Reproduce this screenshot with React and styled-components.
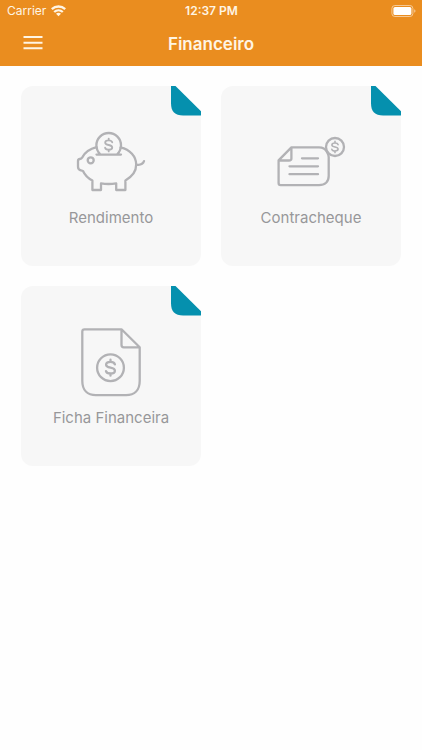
import React from "react";
import styled, { createGlobalStyle } from "styled-components";

const GlobalStyle = createGlobalStyle`
    * {
        box-sizing: border-box;
    }

    body {
        margin: 0;
        background: #fefefe;
        font-family: Inter, "Liberation Sans", sans-serif;
    }
`;

const Header = styled.header`
    background: #ea8d1f;
    color: #fff5e4;
`;

const StatusBar = styled.div`
    display: grid;
    grid-template-columns: 1fr auto 1fr;
    align-items: center;
    height: 22px;
    padding: 0 6px 0 7px;
    font-size: 12px;
    line-height: 22px;
`;

const Carrier = styled.div`
    display: flex;
    align-items: center;
    gap: 5px;
`;

const Clock = styled.time`
    font-weight: 600;
`;

const Battery = styled.svg`
    justify-self: end;
`;

const NavBar = styled.div`
    display: grid;
    grid-template-columns: 1fr auto 1fr;
    align-items: center;
    height: 44px;
    padding: 0 21px;
`;

const MenuButton = styled.button`
    display: flex;
    justify-self: start;
    padding: 0;
    border: 0;
    background: none;
    color: inherit;
    cursor: pointer;
`;

const Title = styled.h1`
    margin: 0;
    font-size: 17px;
    font-weight: 600;
    line-height: 24px;
`;

const CardGrid = styled.main`
    display: grid;
    grid-template-columns: 1fr 1fr;
    gap: 20px;
    padding: 20px 21px;
`;

const Card = styled.button`
    position: relative;
    display: flex;
    flex-direction: column;
    align-items: center;
    gap: 9px;
    aspect-ratio: 1;
    padding: 40px 0 0;
    border: 0;
    border-radius: 12px;
    background: #f7f7f7;
    color: #97979a;
    font-family: inherit;
    cursor: pointer;
`;

const Fold = styled.svg`
    position: absolute;
    top: 0;
    right: 0;
`;

const CardIcon = styled.svg`
    width: 80px;
    height: 72px;
    fill: none;
    stroke: #b2b2b5;
    stroke-width: 2.3;
    stroke-linecap: round;
    stroke-linejoin: round;
`;

const CardLabel = styled.span`
    font-size: 15px;
    line-height: 22px;
`;

const Dollar = ({ x, y, scale = 1 }) => (
    <path
        transform={`translate(${x} ${y}) scale(${scale})`}
        d="M4.4 -3.4C3.8 -5.2 2.2 -5.8 0 -5.8C-2.6 -5.8 -4.4 -4.7 -4.4 -2.9C-4.4 -1 -2.6 -.5 0 0C2.6 .5 4.4 1.1 4.4 3C4.4 4.8 2.6 5.8 0 5.8C-2.4 5.8 -4 5.2 -4.5 3.4M0 -8V-5.8M0 5.8V8"
    />
);

const PiggyIcon = () => (
    <CardIcon viewBox="0 0 80 72" aria-hidden="true">
        <path d="M29 28A12.3 12.3 0 1 1 46.4 28M25.5 28.6H50" />
        <Dollar x={37.7} y={19} scale={0.8} />
        <path d="M25.5 21.2C19 22.8 14 26.4 11.3 31.4C10.6 32.6 10 32.9 8.8 33C7.6 33.1 7 33.7 7 35V40.5C7 42.4 7.7 43.6 9.2 44.1L12 45C14 49.4 17 52.2 21.4 54.6V64H30V57.4C35 58.2 40 58.2 45.2 57.4V64H54.4V54.4C61 50.8 65.2 45.4 65.2 38.6C65.2 30.4 59 23.6 49.6 21.4" />
        <circle cx="19.7" cy="34.3" r="3" />
        <path d="M65.2 38.6C69.4 39.3 72 38 73 35.2" />
    </CardIcon>
);

const PaycheckIcon = () => (
    <CardIcon viewBox="0 0 80 72" aria-hidden="true">
        <path d="M56 26C54.2 22.6 51.4 21.4 48 21.4H20.4L7.6 34.4V57C7.6 58.4 8.2 59.1 9.6 59.1H48C54 59.1 57.7 55.6 57.7 50V31Q57.6 28.4 56 26M20.4 21.4V32.5C20.4 34 19.6 34.5 18 34.5H7.6M31 32.3H47M18.5 40.3H47M18.5 48.2H47" />
        <circle cx="64" cy="21" r="9" />
        <Dollar x={64} y={21} scale={0.7} />
    </CardIcon>
);

const SheetIcon = () => (
    <CardIcon viewBox="0 0 80 72" aria-hidden="true">
        <path d="M50.5 3.3H13.5C12 3.3 11.3 4 11.3 5.5V55C11.3 64 16.4 69.2 25 69.2H55C63.6 69.2 68.7 64 68.7 55V21.3ZM50.5 3.3V19C50.5 20.5 51.2 21.3 52.7 21.3H68.7" />
        <circle cx="39.5" cy="41.7" r="13.4" />
        <Dollar x={39.5} y={41.7} />
    </CardIcon>
);

const items = [
    { label: "Rendimento", Icon: PiggyIcon },
    { label: "Contracheque", Icon: PaycheckIcon },
    { label: "Ficha Financeira", Icon: SheetIcon }
];

const App = () => (
    <>
        <GlobalStyle />
        <Header>
            <StatusBar>
                <Carrier>
                    Carrier
                    <svg width="15" height="12" viewBox="0 0 15 12" fill="none" stroke="currentColor" strokeWidth="2.3">
                        <path d="M.8 4.2C4.6 .6 10.4 .6 14.2 4.2M3.2 7C5.7 4.7 9.3 4.7 11.8 7" />
                        <path d="M5 8.8C6.5 7.5 8.5 7.5 10 8.8L7.5 11.3Z" fill="currentColor" stroke="none" />
                    </svg>
                </Carrier>
                <Clock>12:37 PM</Clock>
                <Battery width="25" height="12" viewBox="0 0 25 12">
                    <rect x=".9" y=".5" width="21" height="11" rx="3" fill="none" stroke="#f6c995" />
                    <rect x="2.4" y="2" width="18" height="8" rx="1.6" fill="#fff" />
                    <path d="M23.2 4.2Q24.5 4.8 24.5 6T23.2 7.8Z" fill="#f6c995" />
                </Battery>
            </StatusBar>
            <NavBar>
                <MenuButton aria-label="Menu">
                    <svg width="24" height="24" viewBox="0 0 24 24" fill="currentColor">
                        <path d="M2.5 4H21.5V6H2.5ZM2.5 9.7H21.5V11.7H2.5ZM2.5 15.2H21.5V17.2H2.5Z" />
                    </svg>
                </MenuButton>
                <Title>Financeiro</Title>
            </NavBar>
        </Header>
        <CardGrid>
            {items.map(({ label, Icon }) => (
                <Card key={label}>
                    <Fold width="30" height="30" viewBox="0 0 30 30" aria-hidden="true">
                        <path d="M0 0H30V30Z" fill="#fefefe" />
                        <path d="M0 0H4.5L30 25.3V29.5H12Q0 29.5 0 17.5Z" fill="#0590ae" />
                    </Fold>
                    <Icon />
                    <CardLabel>{label}</CardLabel>
                </Card>
            ))}
        </CardGrid>
    </>
);

export default App;
